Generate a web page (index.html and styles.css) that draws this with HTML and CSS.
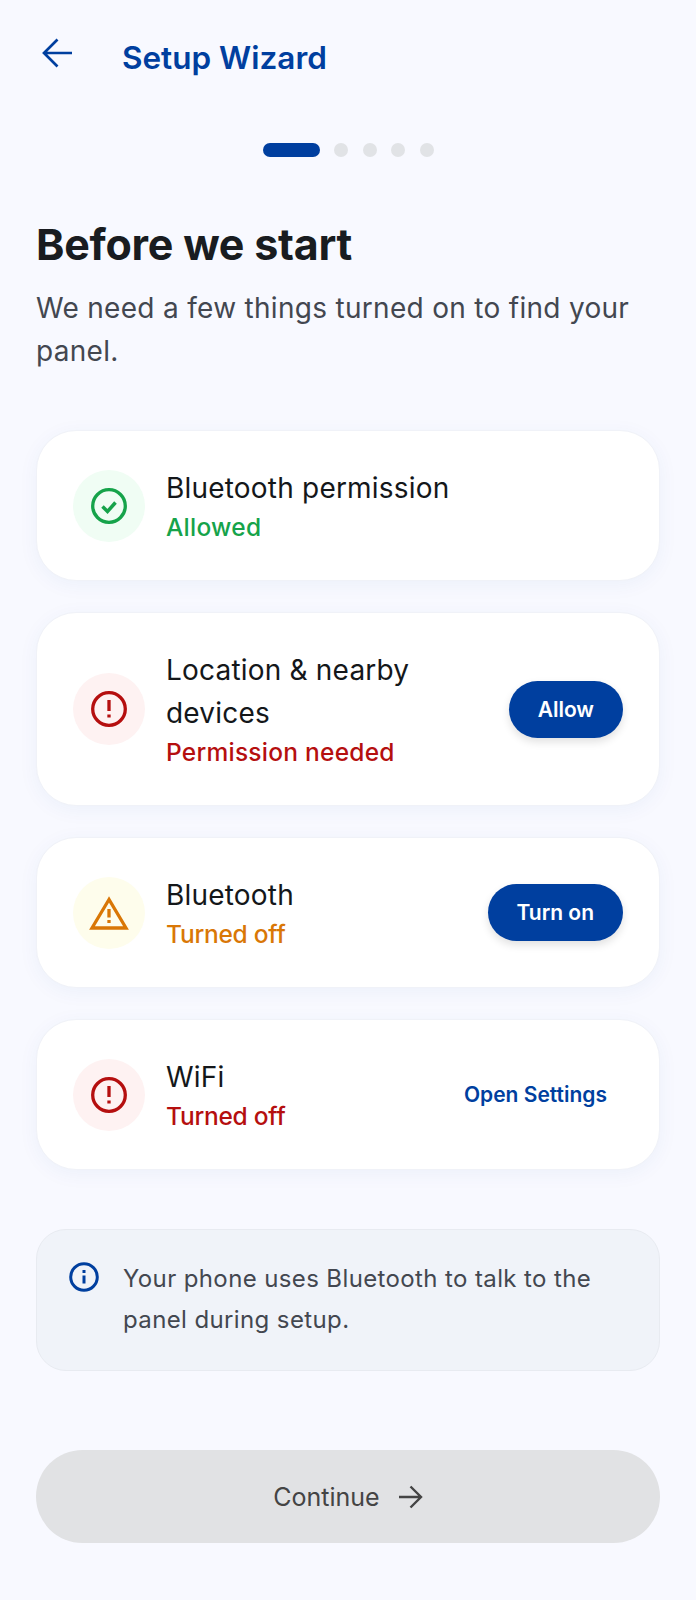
FILE: index.html
```html
<!DOCTYPE html>
<html lang="en">
<head>
  <meta charset="UTF-8">
  <title>Setup Wizard</title>
  <link rel="stylesheet" href="styles.css">
</head>
<body>

  <header class="topbar">
    <svg class="back" width="36" height="36" viewBox="0 0 36 36" fill="none" stroke="#003f9f" stroke-width="2.7">
      <path d="M33 18H6M18.500 4.500 5 18l13.500 13.500"/>
    </svg>
    <h1>Setup Wizard</h1>
  </header>

  <div class="steps">
    <span class="step active"></span>
    <span class="step"></span>
    <span class="step"></span>
    <span class="step"></span>
    <span class="step"></span>
  </div>

  <main class="content">
    <h2>Before we start</h2>
    <p class="lead">We need a few things turned on to find your panel.</p>

    <div class="cards">
      <div class="card">
        <div class="badge green">
          <svg width="36" height="36" viewBox="0 0 36 36" fill="none" stroke="#16a34a" stroke-width="3.300">
            <circle cx="18" cy="18" r="16.300"/>
            <path d="M11.500 18.500l5 5 8-9" stroke-width="3.500"/>
          </svg>
        </div>
        <div class="info">
          <div class="name">Bluetooth permission</div>
          <div class="status ok">Allowed</div>
        </div>
      </div>

      <div class="card">
        <div class="badge red">
          <svg width="36" height="36" viewBox="0 0 36 36" fill="none" stroke="#b50f0f" stroke-width="3.300">
            <circle cx="18" cy="18" r="16.300"/>
            <path d="M18 9v11M18 23.500v3"/>
          </svg>
        </div>
        <div class="info">
          <div class="name">Location &amp; nearby devices</div>
          <div class="status bad">Permission needed</div>
        </div>
        <button class="pill">Allow</button>
      </div>

      <div class="card">
        <div class="badge yellow">
          <svg width="40" height="36" viewBox="0 0 40 36" fill="none" stroke="#d97706" stroke-width="3.300">
            <path d="M20 4.500 3 33h34z"/>
            <path d="M20 14v8.500M20 25v3"/>
          </svg>
        </div>
        <div class="info">
          <div class="name">Bluetooth</div>
          <div class="status warn short">Turned off</div>
        </div>
        <button class="pill">Turn on</button>
      </div>

      <div class="card">
        <div class="badge red">
          <svg width="36" height="36" viewBox="0 0 36 36" fill="none" stroke="#b50f0f" stroke-width="3.300">
            <circle cx="18" cy="18" r="16.300"/>
            <path d="M18 9v11M18 23.500v3"/>
          </svg>
        </div>
        <div class="info">
          <div class="name">WiFi</div>
          <div class="status bad short">Turned off</div>
        </div>
        <button class="link">Open Settings</button>
      </div>
    </div>

    <div class="note">
      <svg width="32" height="32" viewBox="0 0 32 32" fill="none" stroke="#003f9f" stroke-width="3">
        <circle cx="16" cy="16" r="13.300"/>
        <path d="M16 14.500v8M16 9v3"/>
      </svg>
      <p>Your phone uses Bluetooth to talk to the panel during setup.</p>
    </div>

    <button class="continue">
      Continue
      <svg width="26" height="26" viewBox="0 0 26 26" fill="none" stroke="#444" stroke-width="2.400">
        <path d="M2 13h21M13.500 2.500 24 13 13.500 23.500"/>
      </svg>
    </button>
  </main>

</body>
</html>
```

FILE: styles.css
```css
body {
  margin: 0;
  padding: 0;
  width: 696px;
  height: 1600px;
  overflow: hidden;
  font-family: Inter, sans-serif;
  background: #f8f9ff;
}

.topbar {
  display: flex;
  align-items: flex-start;
  gap: 47px;
  height: 55px;
  padding: 35px 0 0 39px;
}

.topbar h1 {
  margin: 3px 0 0;
  font-size: 31.500px;
  font-weight: 600;
  color: #003f9f;
}

.steps {
  display: flex;
  justify-content: center;
  gap: 14.500px;
  margin-top: 53px;
}

.step {
  width: 14px;
  height: 14px;
  border-radius: 7px;
  background: #e1e3e6;
}

.step.active {
  width: 57px;
  background: #003f9f;
}

.content {
  padding: 0 36px;
}

h2 {
  margin: 61px 0 0;
  font-size: 43px;
  line-height: 52px;
  font-weight: 700;
  letter-spacing: -0.25px;
  color: #191c20;
}

.lead {
  margin: 17px 0 0;
  font-size: 28px;
  line-height: 43px;
  letter-spacing: 0.3px;
  color: #434750;
}

.cards {
  display: flex;
  flex-direction: column;
  gap: 31px;
  margin-top: 57px;
}

.card {
  display: flex;
  align-items: center;
  gap: 21px;
  padding: 36px;
  background: #fff;
  border: 1px solid #f0f2f8;
  border-radius: 40px;
  box-shadow: 0 4px 20px rgba(13,71,161,0.05);
}

.badge {
  flex: none;
  display: flex;
  align-items: center;
  justify-content: center;
  width: 72px;
  height: 72px;
  border-radius: 50%;
}

.badge.green { background: #f0fdf4; }
.badge.red { background: #fef2f2; }
.badge.yellow { background: #fefdec; }

.info {
  flex: 1;
}

.name {
  font-size: 28px;
  line-height: 43px;
  letter-spacing: 0.2px;
  color: #14171a;
}

.status {
  font-size: 24.500px;
  line-height: 34px;
  font-weight: 500;
  letter-spacing: 0.25px;
}

.status.short { letter-spacing: -0.25px; }

.status.ok { color: #16a34a; }
.status.bad { color: #b50f0f; }
.status.warn { color: #d97706; }

.pill {
  flex: none;
  height: 57px;
  padding: 0 29px;
  border: 0;
  border-radius: 29px;
  background: #003f9f;
  color: #fff;
  font-family: Inter, sans-serif;
  font-size: 21px;
  font-weight: 600;
  box-shadow: 0 4px 8px rgba(0,0,0,0.12);
}

.link {
  flex: none;
  border: 0;
  padding: 0 16px;
  background: none;
  color: #003f9f;
  font-family: Inter, sans-serif;
  font-size: 21px;
  font-weight: 600;
}

.note {
  display: flex;
  gap: 23px;
  margin-top: 59px;
  padding: 28px 28px 30px 31px;
  background: #f0f3f9;
  border: 1px solid #e8ebf1;
  border-radius: 30px;
}

.note svg {
  flex: none;
  margin-top: 3px;
}

.note p {
  margin: 0;
  font-size: 24px;
  line-height: 41px;
  letter-spacing: 0.38px;
  color: #434750;
}

.continue {
  display: flex;
  align-items: center;
  justify-content: center;
  gap: 17px;
  width: 100%;
  height: 93px;
  margin-top: 79px;
  border: 0;
  border-radius: 47px;
  background: #e1e2e4;
  color: #444;
  font-family: Inter, sans-serif;
  font-size: 25px;
  font-weight: 400;
}
```
